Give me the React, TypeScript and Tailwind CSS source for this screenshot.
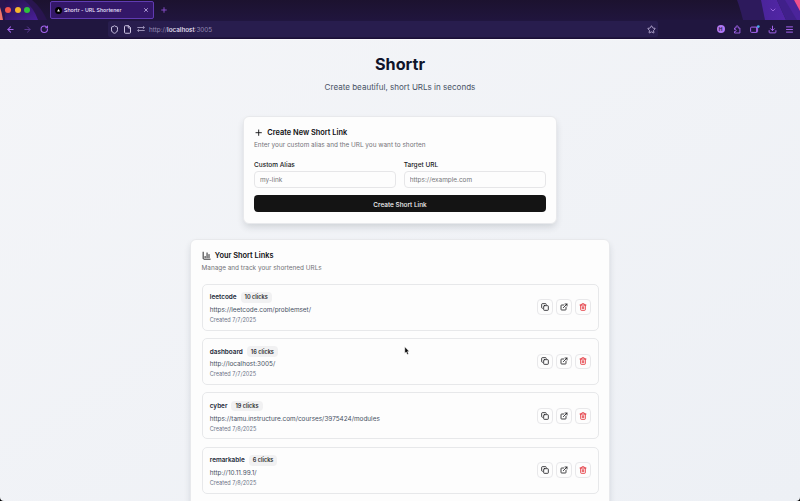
import type { ReactNode } from 'react';
import {
  ArrowLeft,
  ArrowRight,
  ChartColumn,
  ChevronDown,
  Copy,
  Download,
  ExternalLink,
  File,
  Menu,
  Plus,
  RotateCw,
  Shield,
  Star,
  Trash2,
  X,
} from 'lucide-react';

type Link = { alias: string; clicks: number; url: string; created: string };

const links: Link[] = [
  { alias: 'leetcode', clicks: 10, url: 'https://leetcode.com/problemset/', created: '7/7/2025' },
  { alias: 'dashboard', clicks: 16, url: 'http://localhost:3005/', created: '7/7/2025' },
  { alias: 'cyber', clicks: 19, url: 'https://tamu.instructure.com/courses/3975424/modules', created: '7/8/2025' },
  { alias: 'remarkable', clicks: 6, url: 'http://10.11.99.1/', created: '7/8/2025' },
];

function ThemeArt() {
  return (
    <svg className="absolute inset-0" width="800" height="20" viewBox="0 0 800 20" aria-hidden="true">
      <defs>
        <linearGradient id="left" x1="0" x2="1" y1="0" y2="1">
          <stop offset="0" stopColor="#24124a" />
          <stop offset="1" stopColor="#4a1f9a" />
        </linearGradient>
        <linearGradient id="right" x1="0" x2="1" y1="0" y2="0">
          <stop offset="0" stopColor="#4a249b" />
          <stop offset="1" stopColor="#5226a6" />
        </linearGradient>
      </defs>
      <path d="M0 0H32Q41 7 47 20H0Z" fill="#29154f" />
      <path d="M5 0H24Q34 8 38 20H5Z" fill="url(#left)" />
      <path d="M0 7Q2 13 3 20H0Z" fill="#f0756a" />
      <path d="M737 0H800V20H743Q740 8 737 0Z" fill="#2d1a5c" />
      <path d="M761 0H777L786 20H765Z" fill="url(#right)" />
      <path d="M777 0H792L800 14V20H786Z" fill="#40208a" />
      <path d="M785 0H794L800 10V20H797Z" fill="#4b249b" />
      <path d="M794 0H800V11Z" fill="#f0508c" />
    </svg>
  );
}

function BrowserChrome() {
  return (
    <header className="h-10 shrink-0 border-b border-[#f9f9fc] bg-[#20163f]">
      <div className="relative flex h-5 items-center bg-linear-to-b from-[#1c122f] to-[#20153d]">
        <ThemeArt />
        <div className="relative ml-[5px] flex w-[44.5px] gap-[3.5px]">
          <i className="size-[6px] rounded-full bg-[#f2554d]" />
          <i className="size-[6px] rounded-full bg-[#f7b52d]" />
          <i className="size-[6px] rounded-full bg-[#2fc03e]" />
        </div>
        <div className="relative flex h-[18px] w-[104px] items-center rounded-[2px] border border-[#603bb2] bg-[#331768] pl-[4px] pr-[4px]">
          <span className="flex size-[7px] items-center justify-center rounded-full bg-black">
            <svg width="3" height="3" viewBox="0 0 3 3" aria-hidden="true"><path d="M1.5 .1 2.9 2.6H.1Z" fill="white" /></svg>
          </span>
          <span className="ml-[2.5px] flex-1 whitespace-nowrap pt-px text-[5.25px] leading-[9px] font-medium text-[#ece4ff]">Shortr - URL Shortener</span>
          <X size={6} strokeWidth={3} className="text-[#cdbdf0]" />
        </div>
        <Plus size={8} strokeWidth={2.8} className="relative ml-[6px] text-[#8b50d0]" />
        <ChevronDown size={8} strokeWidth={2.6} className="relative ml-auto mr-[23.5px] text-[#a36ee6]" />
      </div>
      <div className="flex h-[19px] items-center border-b border-[#1b0e38] bg-[#20163f] text-[#a565ee]">
        <div className="flex w-[108px] items-center gap-[8px] pl-[6px]">
          <ArrowLeft size={9} strokeWidth={2.8} />
          <ArrowRight size={9} strokeWidth={2.6} className="text-[#5d3a94]" />
          <RotateCw size={8.5} strokeWidth={3} />
        </div>
        <div className="flex h-[16px] w-[550px] items-center rounded-[2px] bg-[#281d4e] text-[#b3a9cd]">
          <Shield size={9} strokeWidth={2.6} className="ml-[2px] text-[#ccc3e3]" />
          <File size={9} strokeWidth={2.6} className="ml-[4px] text-[#d2cae6]" />
          <svg className="ml-[4.5px]" width="8" height="6" viewBox="0 0 8 6" fill="none" stroke="currentColor" strokeWidth=".8" aria-hidden="true">
            <path d="M.3 1.5H7.3M5.9.1 7.4 1.5 5.9 2.9M7.7 4.5H.7M2.1 3.1.6 4.5 2.1 5.9" />
          </svg>
          <span className="ml-[4.5px] pt-[2px] text-[6.35px] leading-[10px] text-[#958bb3]">
            http://<span className="font-medium text-[#eee8fd]">localhost</span>:3005
          </span>
          <Star size={9} strokeWidth={2.6} className="ml-auto mr-[2.5px] text-[#b3a7ce]" />
        </div>
        <div className="ml-auto mr-[6.5px] flex items-center gap-[8px]">
          <span className="flex size-[8px] items-center justify-center rounded-full bg-[#b077f3] text-[5px] leading-[8px] font-bold text-[#281d4e]">H</span>
          <svg width="9" height="9" viewBox="0 0 9 9" fill="none" stroke="currentColor" strokeWidth=".9" strokeLinejoin="round" aria-hidden="true">
            <path d="M1.5 3H3V1.9A1.1 1.1 0 0 1 5.2 1.9V3H6.9V8H1.5V6.5H2.2A1 1 0 0 0 2.2 4.5H1.5Z" />
          </svg>
          <svg width="10" height="9" viewBox="0 0 10 9" fill="none" aria-hidden="true">
            <rect x=".6" y="2.1" width="7" height="5.3" rx="1" stroke="currentColor" strokeWidth="1" />
            <path d="M6.5 2V7.2" stroke="currentColor" strokeWidth=".9" />
            <circle cx="8.3" cy="1.6" r="1.4" fill="#43a8e7" />
          </svg>
          <Download size={9} strokeWidth={2.6} />
          <Menu size={9} strokeWidth={2.6} />
        </div>
      </div>
    </header>
  );
}

function CardHeading({ icon, title, note }: { icon: ReactNode; title: string; note: string }) {
  return (
    <div>
      <h2 className="flex h-[10px] items-center text-[7.4px] font-semibold text-[#101012]">
        <span className="mr-[4px] flex">{icon}</span>
        <span className="leading-[9px]">{title}</span>
      </h2>
      <p className="mt-[3px] h-[9px] text-[6.42px] leading-[9px] text-[#737378]">{note}</p>
    </div>
  );
}

function Field({ label, placeholder }: { label: string; placeholder: string }) {
  return (
    <label className="flex flex-1 flex-col">
      <span className="h-[11px] text-[6.5px] leading-[10px] font-medium text-[#17171a]">{label}</span>
      <input
        placeholder={placeholder}
        className="h-[17.5px] w-full rounded-[4px] border border-[#e6e6e8] bg-transparent px-[5px] pt-[1.5px] text-[6.45px] outline-none placeholder:text-[#77777b]"
      />
    </label>
  );
}

function IconButton({ name, danger, children }: { name: string; danger?: boolean; children: ReactNode }) {
  return (
    <button
      aria-label={name}
      className={`flex size-[15.5px] items-center justify-center rounded-[4px] border border-[#e8e8ea] bg-[#fdfdfd] ${danger ? 'text-[#e22a33]' : 'text-[#1d1d20]'}`}
    >
      {children}
    </button>
  );
}

function LinkRow({ link }: { link: Link }) {
  return (
    <li className="flex h-[47px] items-center justify-between rounded-[5px] border border-[#e7e8ea] pl-[7.25px] pr-[7px]">
      <div className="flex flex-col pt-px">
        <div className="flex h-[10px] items-center gap-[4px]">
          <h3 className="pt-px text-[6.4px] leading-[9px] font-semibold text-[#222938]">{link.alias}</h3>
          <span className="flex h-[10.5px] items-center rounded-[4px] bg-[#f1f1f2] px-[4px] text-[5.6px] leading-[10px] font-semibold text-[#2a2a2d]">
            {link.clicks} clicks
          </span>
        </div>
        <p className="mt-[2.5px] h-[9px] text-[6.4px] leading-[10.5px] text-[#475164]">{link.url}</p>
        <p className="mt-[2px] h-[7px] text-[5.55px] leading-[8.5px] text-[#6b7487]">Created {link.created}</p>
      </div>
      <div className="flex gap-[3.4px]">
        <IconButton name="Copy"><Copy size={8} strokeWidth={2.5} /></IconButton>
        <IconButton name="Open"><ExternalLink size={8} strokeWidth={2.5} /></IconButton>
        <IconButton name="Delete" danger><Trash2 size={8} strokeWidth={2.5} /></IconButton>
      </div>
    </li>
  );
}

export default function App() {
  return (
    <div className="relative flex h-[501px] w-[800px] flex-col overflow-hidden bg-black font-['Inter','Liberation_Sans',sans-serif]">
      <BrowserChrome />
      <main className="flex flex-1 flex-col items-center overflow-hidden rounded-b-[4px] bg-linear-to-br from-[#f4f5f8] to-[#edf0f5]">
        <h1 className="mt-[14px] h-[20px] text-[16.2px] leading-[20px] font-bold text-[#10142a]">Shortr</h1>
        <p className="mt-[7px] h-[12px] text-[8.05px] leading-[13px] text-[#495366]">Create beautiful, short URLs in seconds</p>

        <section className="mt-[23px] h-[108px] w-[314px] shrink-0 rounded-[6px] border border-[#e8e9ec] bg-[#fdfdfd] px-[10px] pt-[10.5px] shadow-[0_4px_7px_-1px_rgba(30,41,59,0.16)]">
          <CardHeading
            icon={<Plus size={9.35} strokeWidth={2.3} />}
            title="Create New Short Link"
            note="Enter your custom alias and the URL you want to shorten"
          />
          <div className="mt-[10px] flex gap-[7.5px]">
            <Field label="Custom Alias" placeholder="my-link" />
            <Field label="Target URL" placeholder="https://example.com" />
          </div>
          <button className="mt-[7px] flex h-[17px] w-full items-center justify-center rounded-[4px] bg-[#141414] pt-[2px] text-[6.45px] leading-[10px] font-medium text-[#f5f5f5]">
            Create Short Link
          </button>
        </section>

        <section className="mt-[15px] h-[300px] w-[420px] shrink-0 rounded-[6px] border border-[#e8e9ec] bg-[#fdfdfd] px-[10.5px] pt-[10.5px] shadow-[0_4px_7px_-1px_rgba(30,41,59,0.16)]">
          <CardHeading
            icon={<ChartColumn size={9.35} strokeWidth={2.3} />}
            title="Your Short Links"
            note="Manage and track your shortened URLs"
          />
          <ul className="mt-[11px] flex flex-col gap-[7.4px]">
            {links.map((link) => (
              <LinkRow key={link.alias} link={link} />
            ))}
          </ul>
        </section>
      </main>
      {/* Mouse pointer */}
      <svg className="absolute left-[404px] top-[346px]" width="6" height="10" viewBox="0 0 6 10" aria-hidden="true">
        <path d="M.8.8V7.2L2.2 6 3.2 8.6 4.5 8.1 3.5 5.6H5.2Z" fill="#050505" stroke="white" strokeWidth=".5" />
      </svg>
    </div>
  );
}
